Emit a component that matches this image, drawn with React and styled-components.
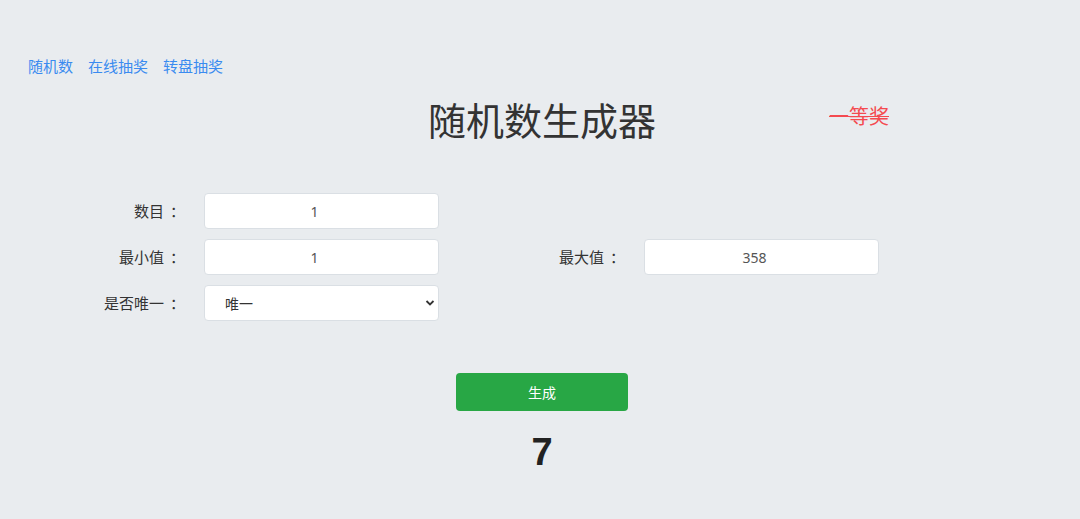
import React from "react";
import styled, { createGlobalStyle } from "styled-components";

const Global = createGlobalStyle`
  html, body { margin: 0; padding: 0; background: #e9ecef; }
  body { font-family: "Noto Sans CJK SC", "Noto Sans", sans-serif; color: #333; }
`;

const Page = styled.div`
  min-height: 519px;
  background: #e9ecef;
  padding-top: 54px;
  box-sizing: border-box;
`;

const Nav = styled.nav`
  display: flex;
  gap: 15px;
  padding-left: 28px;
  height: 24px;
  align-items: center;
`;

const NavLink = styled.a`
  font-size: 15px;
  color: #3a8bf0;
  text-decoration: none;
  line-height: 24px;
`;

const Header = styled.div`
  display: grid;
  grid-template-columns: 1fr auto 1fr;
  align-items: center;
  margin-top: 16px;
  height: 50px;
`;

const Title = styled.h1`
  grid-column: 2;
  margin: 0;
  font-size: 38px;
  font-weight: 400;
  color: #333;
  line-height: 50px;
  padding-left: 4px;
`;

const Prize = styled.span`
  grid-column: 3;
  justify-self: start;
  margin-left: 173px;
  font-size: 20px;
  color: #f44a50;
  text-decoration: line-through;
  text-decoration-thickness: 1px;
  margin-top: -8px;
`;

const Form = styled.div`
  display: grid;
  grid-template-columns: 190px 235px 177px 235px;
  column-gap: 14px;
  row-gap: 10px;
  margin-top: 49px;
`;

const Label = styled.label`
  grid-column: ${(p) => p.col || 1};
  font-size: 15px;
  color: #333;
  text-align: right;
  line-height: 36px;
  padding-right: 5px;
`;

const Colon = styled.span`
  margin-left: 6px;
`;

const Input = styled.input`
  grid-column: ${(p) => p.col || 2};
  height: 36px;
  box-sizing: border-box;
  border: 1px solid #dadfe4;
  border-radius: 4px;
  background: #fff;
  text-align: center;
  padding: 0 14px 0 0;
  font-family: "Noto Sans", sans-serif;
  font-size: 14px;
  color: #555;
  outline: none;
`;

const SelectWrap = styled.div`
  grid-column: 2;
  position: relative;
  height: 36px;
`;

const Select = styled.select`
  appearance: none;
  width: 100%;
  height: 36px;
  box-sizing: border-box;
  border: 1px solid #dadfe4;
  border-radius: 4px;
  background: #fff;
  padding-left: 20px;
  font-family: "Noto Sans CJK SC", sans-serif;
  font-size: 14px;
  color: #333;
  outline: none;
`;

const Chevron = styled.svg`
  position: absolute;
  right: 4px;
  top: 14px;
  pointer-events: none;
`;

const Actions = styled.div`
  display: flex;
  flex-direction: column;
  align-items: center;
  margin-top: 52px;
  padding-left: 4px;
`;

const Button = styled.button`
  width: 172px;
  height: 38px;
  border: none;
  border-radius: 4px;
  background: #28a745;
  color: #fff;
  font-family: "Noto Sans CJK SC", sans-serif;
  font-size: 14px;
`;

const Result = styled.div`
  margin-top: 19px;
  font-family: "Liberation Sans", Arial, sans-serif;
  font-weight: 700;
  font-size: 38px;
  line-height: 44px;
  color: #222;
`;

const Field = ({ text, col }) => (
  <Label col={col}>
    {text}
    <Colon>：</Colon>
  </Label>
);

export default function App() {
  return (
    <Page>
      <Global />
      <Nav>
        <NavLink href="#">随机数</NavLink>
        <NavLink href="#">在线抽奖</NavLink>
        <NavLink href="#">转盘抽奖</NavLink>
      </Nav>
      <Header>
        <Title>随机数生成器</Title>
        <Prize>一等奖</Prize>
      </Header>
      <Form>
        <Field text="数目" />
        <Input defaultValue="1" />
        <Field text="最小值" />
        <Input defaultValue="1" />
        <Field text="最大值" col={3} />
        <Input col={4} defaultValue="358" />
        <Field text="是否唯一" />
        <SelectWrap>
          <Select defaultValue="1">
            <option value="1">唯一</option>
            <option value="0">不唯一</option>
          </Select>
          <Chevron width="10" height="8" viewBox="0 0 10 8">
            <path d="M1.5 2 L5 5.5 L8.5 2" stroke="#333" strokeWidth="1.8" fill="none" />
          </Chevron>
        </SelectWrap>
      </Form>
      <Actions>
        <Button>生成</Button>
        <Result>7</Result>
      </Actions>
    </Page>
  );
}
